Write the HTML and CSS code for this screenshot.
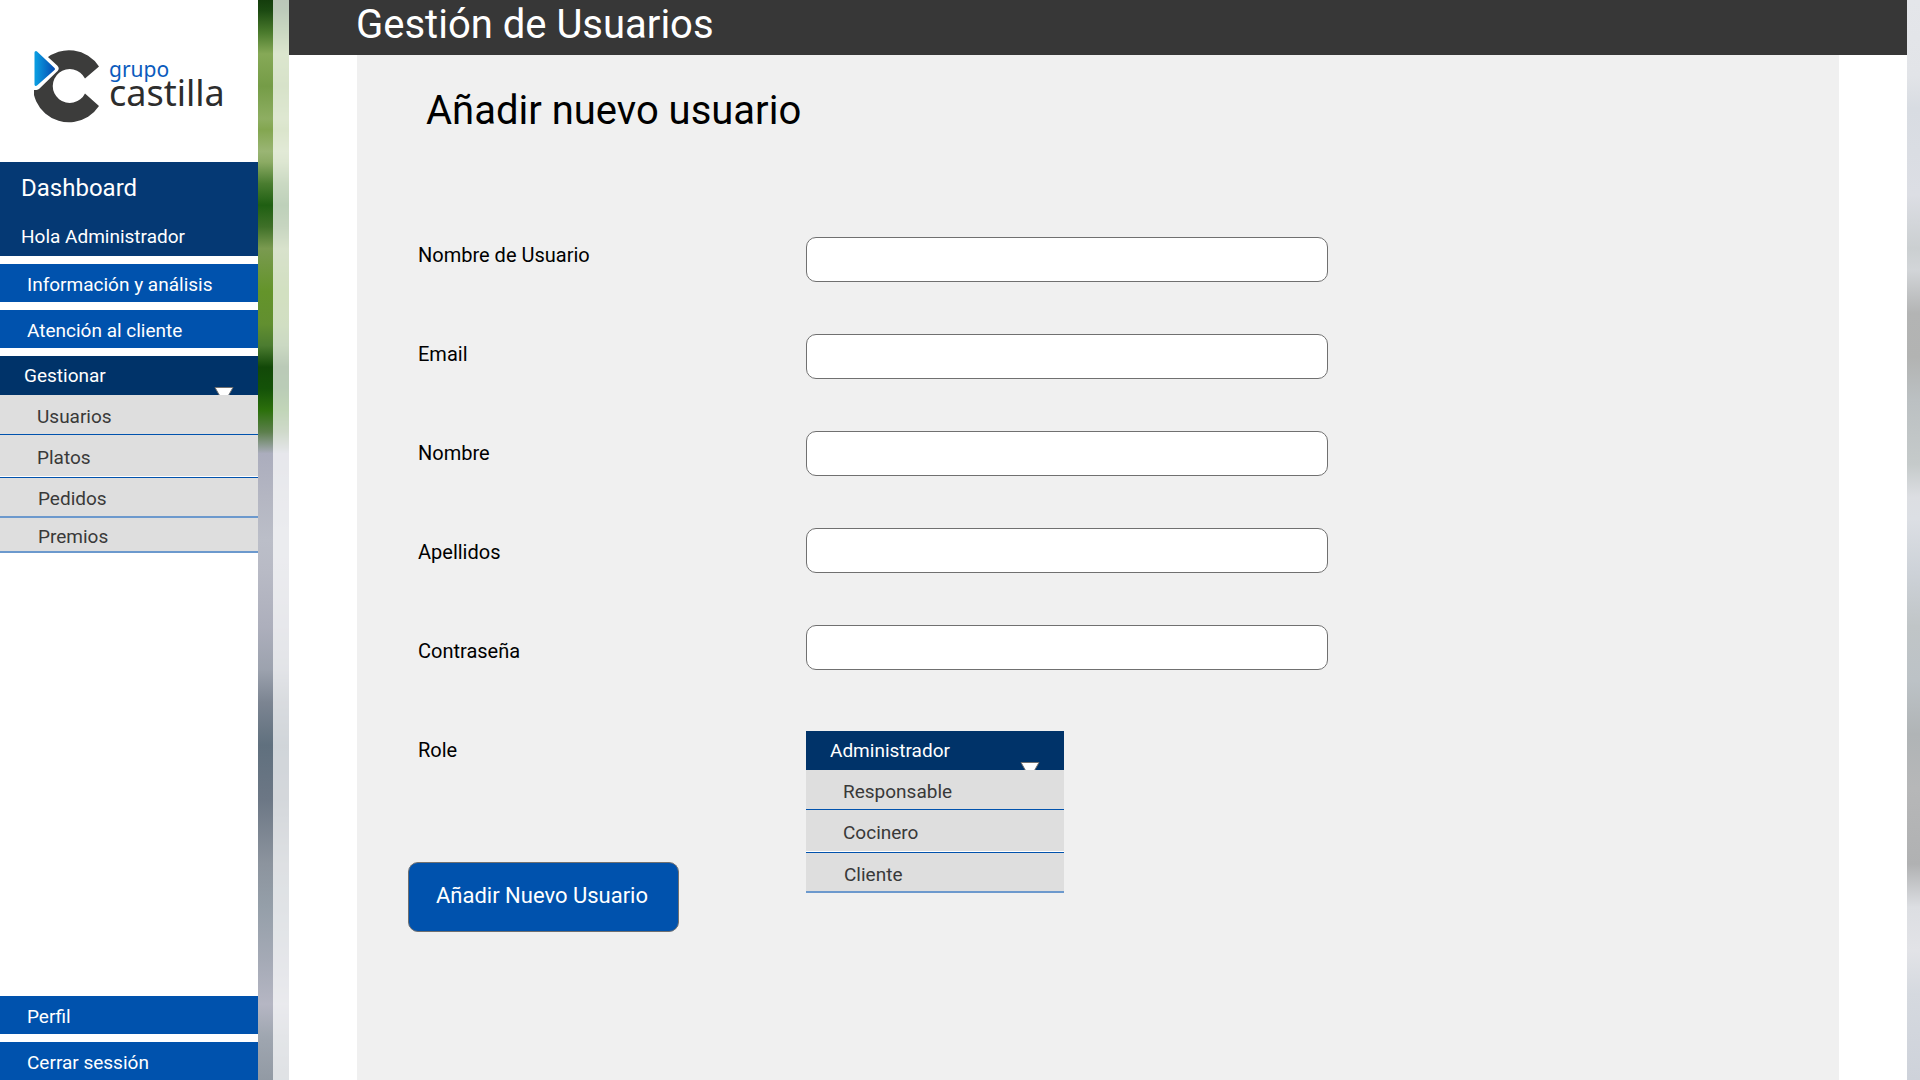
FILE: index.html
```html
<!DOCTYPE html>
<html lang="es">
<head>
<meta charset="utf-8">
<meta name="viewport" content="width=device-width, initial-scale=1">
<title>Gestión de Usuarios</title>
<link rel="stylesheet" href="styles.css">
</head>
<body>
<div class="layout">
  <aside class="sidebar">
    <a class="brand" href="#">
      <svg class="brand-mark" viewBox="0 0 66 74" aria-hidden="true">
        <defs>
          <linearGradient id="arrow" x1="0" x2="1" y1="0" y2="0">
            <stop offset="0" stop-color="#0a9be0"/>
            <stop offset="1" stop-color="#0650b4"/>
          </linearGradient>
        </defs>
        <path fill="#3c3c3b" d="M65 16.500L51 28.500A17 17 0 1 0 51 43.500L65 56A36 36 0 1 1 65 16.500Z"/>
        <path fill="#fff" stroke="#fff" stroke-width="8" stroke-linejoin="round" d="M0 1.500L2 1.500L20.500 18.500L2.500 36L0 36Z"/>
        <path fill="url(#arrow)" stroke="url(#arrow)" stroke-width="3" stroke-linejoin="round" d="M2 2.500L19.500 19L2 34.500Z"/>
      </svg>
      <span class="brand-name">
        <span class="brand-top">grupo</span>
        <span class="brand-bottom">castilla</span>
      </span>
    </a>
    <div class="welcome">
      <h2 class="welcome-title">Dashboard</h2>
      <p class="welcome-text">Hola Administrador</p>
    </div>
    <nav class="nav">
      <a class="nav-link" href="#">Información y análisis</a>
      <a class="nav-link" href="#">Atención al cliente</a>
      <div class="menu">
        <button class="menu-head" type="button" aria-expanded="true">Gestionar
          <svg class="caret" viewBox="0 0 20 8" aria-hidden="true"><path d="M1 .5H19L12.500 12H7.500Z"/></svg>
        </button>
        <ul class="menu-list">
          <li><a class="menu-item" href="#">Usuarios</a></li>
          <li><a class="menu-item menu-item-tall" href="#">Platos</a></li>
          <li><a class="menu-item menu-item-soft" href="#">Pedidos</a></li>
          <li><a class="menu-item menu-item-soft menu-item-short" href="#">Premios</a></li>
        </ul>
      </div>
    </nav>
    <nav class="nav nav-bottom">
      <a class="nav-link" href="#">Perfil</a>
      <a class="nav-link" href="#">Cerrar sessión</a>
    </nav>
  </aside>
  <div class="photo photo-left"><div class="veil"></div></div>
  <main class="main">
    <header class="topbar"><h1 class="topbar-title">Gestión de Usuarios</h1></header>
    <section class="panel">
      <h2 class="panel-title">Añadir nuevo usuario</h2>
      <form class="form">
        <div class="labels">
          <label class="label" for="user">Nombre de Usuario</label>
          <label class="label" for="email">Email</label>
          <label class="label" for="name">Nombre</label>
          <label class="label" for="surname">Apellidos</label>
          <label class="label" for="password">Contraseña</label>
          <label class="label" for="role">Role</label>
          <button class="submit" type="submit">Añadir Nuevo Usuario</button>
        </div>
        <div class="fields">
          <input class="field" id="user" type="text">
          <input class="field" id="email" type="email">
          <input class="field" id="name" type="text">
          <input class="field" id="surname" type="text">
          <input class="field" id="password" type="password">
          <div class="menu role">
            <div class="role-head">
              <select class="menu-head" id="role">
                <option>Administrador</option>
                <option>Responsable</option>
                <option>Cocinero</option>
                <option>Cliente</option>
              </select>
              <svg class="caret" viewBox="0 0 20 8" aria-hidden="true"><path d="M1 .5H19L12.500 12H7.500Z"/></svg>
            </div>
            <ul class="menu-list">
              <li><button class="menu-item" type="button">Responsable</button></li>
              <li><button class="menu-item menu-item-tall" type="button">Cocinero</button></li>
              <li><button class="menu-item menu-item-soft" type="button">Cliente</button></li>
            </ul>
          </div>
        </div>
      </form>
    </section>
  </main>
  <div class="photo photo-right"></div>
</div>
</body>
</html>
```
FILE: styles.css
```css
* { box-sizing: border-box; }

body {
  margin: 0;
  font-family: Roboto, "Liberation Sans", sans-serif;
  font-size: 20px;
  color: #000;
  background: #fff;
}

h1, h2, p, ul { margin: 0; padding: 0; font-weight: 400; }
ul { list-style: none; }
a { color: inherit; text-decoration: none; }

.layout {
  display: grid;
  grid-template-columns: 258px 31px minmax(0, 1fr) 13px;
  min-height: 100vh;
}

/* Sidebar */
.sidebar { display: flex; flex-direction: column; background: #fff; }

.brand {
  display: flex;
  gap: 9px;
  height: 162px;
  padding: 50px 0 0 34px;
}
.brand-mark { width: 66px; height: 74px; flex: none; }
.brand-name {
  display: flex;
  flex-direction: column;
  padding-top: 7px;
  font-family: "Noto Sans", sans-serif;
}
.brand-top { font-size: 21px; line-height: 24px; color: #0a5bbd; }
.brand-bottom { font-size: 36px; line-height: 24px; color: #2d2d2d; }

.welcome {
  height: 94px;
  padding: 10px 21px 0;
  color: #fff;
  background: #053974;
}
.welcome-title { font-size: 24px; line-height: 32px; }
.welcome-text { padding-top: 21px; font-size: 19px; line-height: 24px; }

.nav { display: flex; flex-direction: column; gap: 8px; padding-top: 8px; }
.nav-bottom { margin-top: auto; }
.nav-link {
  height: 38px;
  padding: 2px 27px 0;
  line-height: 38px;
  font-size: 19px;
  color: #fff;
  background: #0052ad;
}

.menu-head {
  position: relative;
  display: block;
  width: 100%;
  height: 39px;
  padding: 0 24px;
  border: 0;
  border-radius: 0;
  appearance: none;
  font: 400 19px/39px Roboto, "Liberation Sans", sans-serif;
  text-align: left;
  color: #fff;
  background: #003369;
}
.caret {
  position: absolute;
  right: 24px;
  bottom: 0;
  width: 20px;
  height: 8px;
  fill: #fff;
  stroke: #707070;
}
.menu-item {
  display: block;
  width: 100%;
  height: 40px;
  padding: 4px 37px 0;
  border: 0;
  border-bottom: 1px solid #0052ad;
  font: 400 19px/35px Roboto, "Liberation Sans", sans-serif;
  text-align: left;
  color: #393939;
  background: #dedede;
}
.menu-item-tall { height: 43px; padding-top: 5px; box-shadow: inset 0 -1px #fff; }
.menu-item-soft { padding-top: 3px; padding-left: 38px; border-bottom: 2px solid #6c99cd; }
.menu-item-short { height: 35px; padding-top: 1px; }
button.menu-item { padding-top: 4px; padding-bottom: 0; }
button.menu-item-tall,
button.menu-item-soft { padding-bottom: 2px; }

/* Background photo showing between the columns */
.photo { display: flex; justify-content: flex-end; }
.photo-left {
  background: linear-gradient(
    #143d0c 0%, #1c4a12 1%, #4a7a2c 3%, #86a957 5%, #759c47 8%, #8eae62 11%,
    #83a650 12%, #9ab574 14%, #8cab64 15%, #4a7d30 17%, #1f5f12 19%, #3f7028 21%,
    #7a9a50 23%, #64942a 27%, #628f30 30%, #4c7c30 32%, #124808 34%, #145208 36%,
    #2c700c 38%, #5c7f4c 40%, #abadbd 42%, #b4b6c2 46%, #bbbec8 50%, #b8bac5 53%,
    #adafbc 58%, #9ca2ae 62%, #7c8592 65%, #60707e 69%, #6c7785 74%, #8c949e 80%,
    #959fa9 84%, #a5aab6 89%, #b5b6c3 93%, #9fa6b0 96%, #929aa4 100%);
}
.veil { width: 16px; background: rgba(255, 255, 255, .71); }
.photo-right {
  background: linear-gradient(
    #e4e6ea 0%, #e2e4e8 7%, #d8dce2 10%, #dcdee4 18%, #cbcfd1 23%, #d2d5d8 25%,
    #b3b4b4 29%, #b2b3b2 33%, #bbc0c2 37%, #c5caca 43%, #dcdee2 46%, #dcdfe4 48%,
    #cdd2d8 53%, #c0c5c7 58%, #bcc2c6 63%, #b0b4b6 68%, #b6b7b8 73%, #b0b1b2 80%,
    #dcdee2 84%, #e2e3e7 88%, #d5d9df 92%, #ced2da 100%);
}

/* Content */
.main { display: flex; flex-direction: column; background: #fff; }
.topbar { height: 55px; padding: 0 67px; color: #fff; background: #373737; }
.topbar-title { font-size: 40px; line-height: 50px; }
.panel { flex: 1; margin: 0 68px; padding: 28px 51px 40px; background: #f0f0f0; }
.panel-title { padding-left: 18px; font-size: 40px; line-height: 56px; }

.form { display: grid; grid-template-columns: minmax(272px, 398px) minmax(0, 522px); padding-top: 98px; }
.labels { display: flex; flex-direction: column; align-items: flex-start; gap: 75px; padding: 6px 10px 0; }
.label { line-height: 24px; }
.submit {
  height: 70px;
  width: 271px;
  margin: 25px 0 0 -10px;
  padding: 0 3px 3px 0;
  border: 1px solid #707070;
  border-radius: 10px;
  font: 400 22px/28px Roboto, "Liberation Sans", sans-serif;
  color: #fff;
  background: #0052ad;
}
.fields { display: flex; flex-direction: column; gap: 52px; }
.field {
  width: 100%;
  height: 45px;
  padding: 0 12px;
  border: 1px solid #707070;
  border-radius: 10px;
  font: inherit;
  background: #fff;
}
.role { width: 258px; margin-top: 9px; }
.role-head { position: relative; }
```
